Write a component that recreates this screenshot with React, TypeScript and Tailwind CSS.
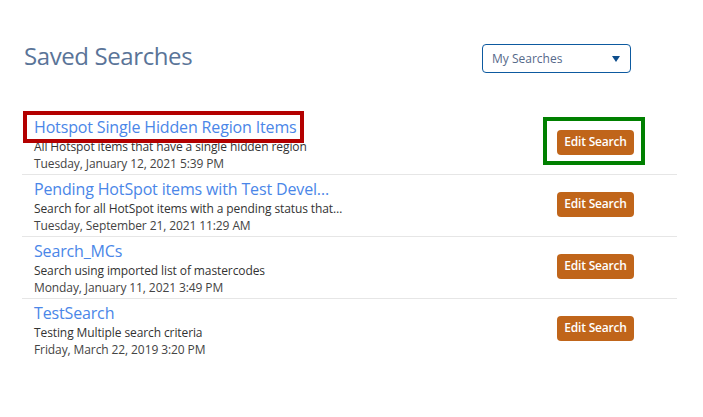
const searches = [
  {
    name: 'Hotspot Single Hidden Region Items',
    description: 'All Hotspot items that have a single hidden region',
    date: 'Tuesday, January 12, 2021 5:39 PM',
  },
  {
    name: 'Pending HotSpot items with Test Devel…',
    description: 'Search for all HotSpot items with a pending status that…',
    date: 'Tuesday, September 21, 2021 11:29 AM',
  },
  {
    name: 'Search_MCs',
    description: 'Search using imported list of mastercodes',
    date: 'Monday, January 11, 2021 3:49 PM',
  },
  {
    name: 'TestSearch',
    description: 'Testing Multiple search criteria',
    date: 'Friday, March 22, 2019 3:20 PM',
  },
];

export default function App() {
  return (
    <div className="min-h-[417px] w-[703px] bg-white pl-[22px] pr-[26px] pt-[40px] font-['Open_Sans',sans-serif]">
      {/* Header */}
      <div className="flex items-start">
        <h1 className="flex-1 pl-[2px] text-[24px] leading-[32px] tracking-[-0.4px] text-[#5a7498]">Saved Searches</h1>
        <div className="mr-[46px] mt-[4px] flex h-[29px] w-[149px] items-center justify-between rounded-[4px] border border-[#0d5aa0] pl-[9px] pr-[10px]">
          <span className="text-[12px] text-[#56698a]">My Searches</span>
          <svg width="8" height="6" viewBox="0 0 8 6">
            <path d="M0 0 H8 L4 6 Z" fill="#0d4d8c" />
          </svg>
        </div>
      </div>

      {/* Saved list */}
      <div className="mt-[40px]">
        {searches.map((s, i) => (
          <div
            key={s.name}
            className={`flex pb-[2px] pl-[12px] pt-[3px] ${i < searches.length - 1 ? 'border-b border-[#e6e6e6]' : ''}`}
          >
            <div className="flex-1">
              <div
                className={`-ml-[6px] w-fit whitespace-nowrap pl-[6px] pr-[2px] text-[16px] leading-[22px] tracking-[-0.15px] text-[#4a86e8] ${
                  i === 0 ? 'bg-white outline-4 outline-offset-1 outline-[#b30000]' : ''
                }`}
              >
                {s.name}
              </div>
              <div className="text-[12px] leading-[17px] tracking-[-0.1px] text-[#333]">{s.description}</div>
              <div className="text-[12px] leading-[17px] tracking-[-0.1px] text-[#444]">{s.date}</div>
            </div>
            <div className="mr-[36px] mt-[5px] self-start">
              <div className={`pb-[6px] pl-[10px] pr-[7px] pt-[7px] ${i === 0 ? 'outline-4 outline-[#008000]' : ''}`}>
                <button className="h-[25px] w-[77px] rounded-[4px] bg-[#c0651a] text-[12px] font-semibold tracking-[-0.2px] text-white">
                  Edit Search
                </button>
              </div>
            </div>
          </div>
        ))}
      </div>
    </div>
  );
}
